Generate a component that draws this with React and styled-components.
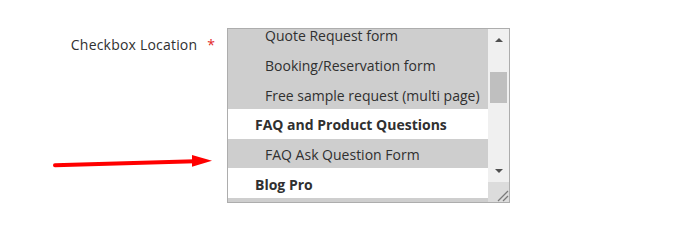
import React from 'react';
import styled, { createGlobalStyle } from 'styled-components';

const GlobalStyle = createGlobalStyle`
  html, body {
    margin: 0;
    padding: 0;
    background: #ffffff;
  }
  body {
    font-family: 'Open Sans', 'Noto Sans', 'Liberation Sans', sans-serif;
    color: #303030;
  }
`;

const Page = styled.div`
  position: relative;
  width: 685px;
  height: 226px;
  padding-top: 28px;
  box-sizing: border-box;
  overflow: hidden;
`;

const Field = styled.div`
  display: flex;
  align-items: flex-start;
`;

const Label = styled.label`
  width: 215px;
  padding-top: 7px;
  text-align: right;
  font-size: 14px;
  line-height: 19px;
  letter-spacing: 0.2px;
  color: #303030;
  white-space: nowrap;
  flex-shrink: 0;

  &::after {
    content: '*';
    color: #e22626;
    margin-left: 10px;
    letter-spacing: 0;
    font-size: 14px;
  }
`;

const Control = styled.div`
  margin-left: 12px;
`;

const SelectBox = styled.div`
  display: flex;
  width: 283px;
  height: 175px;
  box-sizing: border-box;
  border: 1px solid #adadad;
  background: #ffffff;
`;

const Options = styled.div`
  flex: 1;
  overflow: hidden;
`;

const OptionList = styled.ul`
  list-style: none;
  margin: -9px 0 0;
  padding: 0;
`;

const Option = styled.li`
  display: flex;
  align-items: center;
  height: 29.67px;
  box-sizing: border-box;
  padding-top: 2px;
  padding-left: ${(p) => (p.$group ? '27px' : '37px')};
  font-size: 14px;
  font-weight: ${(p) => (p.$group ? 700 : 400)};
  color: #303030;
  background: ${(p) => (p.$selected ? '#cecece' : '#ffffff')};
  white-space: nowrap;
`;

const Scrollbar = styled.div`
  display: flex;
  flex-direction: column;
  width: 21px;
  background: #f0f0f0;
`;

const ArrowButton = styled.div`
  height: 21px;
  display: flex;
  align-items: center;
  justify-content: center;
  padding-left: 1px;

  &::before {
    content: '';
    width: 0;
    height: 0;
    border-left: 4.5px solid transparent;
    border-right: 4.5px solid transparent;
    ${(p) =>
      p.$down
        ? 'border-top: 4px solid #505050; margin-top: -2px;'
        : 'border-bottom: 4px solid #505050; margin-top: 0px;'}
  }
`;

const Track = styled.div`
  flex: 1;
  padding-top: ${(p) => p.$offset}px;
  box-sizing: border-box;
`;

const Thumb = styled.div`
  width: 17px;
  height: 31px;
  margin-left: 2px;
  background: #bfbfbf;
`;

const Resizer = styled.div`
  height: 20px;
  background: #dcdcdc;
  display: flex;
  align-items: flex-end;
  justify-content: flex-end;
`;

const Annotation = styled.svg`
  position: absolute;
  left: 0;
  top: 0;
  pointer-events: none;
`;

const options = [
  { id: 'quote', label: 'Quote Request form', selected: true },
  { id: 'booking', label: 'Booking/Reservation form', selected: true },
  { id: 'sample', label: 'Free sample request (multi page)', selected: true },
  { id: 'faq', label: 'FAQ and Product Questions', group: true },
  { id: 'faq-ask', label: 'FAQ Ask Question Form', selected: true },
  { id: 'blog', label: 'Blog Pro', group: true },
  { id: 'blog-next', label: '', selected: true },
];

export default function App() {
  return (
    <>
      <GlobalStyle />
      <Page>
        <Field>
          <Label>Checkbox Location</Label>
          <Control>
            <SelectBox>
              <Options>
                <OptionList>
                  {options.map((o) => (
                    <Option key={o.id} $group={o.group} $selected={o.selected}>
                      {o.label}
                    </Option>
                  ))}
                </OptionList>
              </Options>
              <Scrollbar>
                <ArrowButton />
                <Track $offset={22}>
                  <Thumb />
                </Track>
                <ArrowButton $down />
                <Resizer>
                  <svg width="20" height="20" viewBox="0 0 20 20">
                    <line x1="9" y1="19" x2="19" y2="9" stroke="#7a7a7a" strokeWidth="1.2" />
                    <line x1="14" y1="19" x2="19" y2="14" stroke="#7a7a7a" strokeWidth="1.2" />
                  </svg>
                </Resizer>
              </Scrollbar>
            </SelectBox>
          </Control>
        </Field>
        <Annotation width="685" height="226" viewBox="0 0 685 226">
          <line x1="55" y1="165.3" x2="195" y2="161.3" stroke="#ff0000" strokeWidth="4" strokeLinecap="round" />
          <polygon points="192,155 212,160.7 192,166.7" fill="#ff0000" />
        </Annotation>
      </Page>
    </>
  );
}
